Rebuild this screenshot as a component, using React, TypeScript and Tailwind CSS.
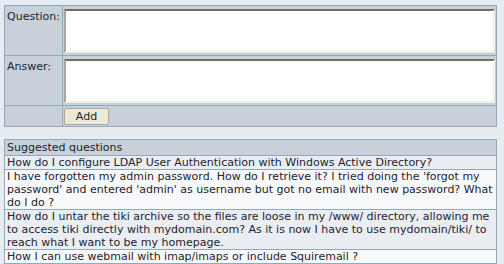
import React from 'react';

const suggestions = [
  'How do I configure LDAP User Authentication with Windows Active Directory?',
  "I have forgotten my admin password. How do I retrieve it? I tried doing the 'forgot my password' and entered 'admin' as username but got no email with new password? What do I do ?",
  'How do I untar the tiki archive so the files are loose in my /www/ directory, allowing me to access tiki directly with mydomain.com? As it is now I have to use mydomain/tiki/ to reach what I want to be my homepage.',
  'How I can use webmail with imap/imaps or include Squiremail ?',
];

export default function App() {
  return (
    <div
      className="min-h-screen bg-[#e7ecf0] px-[4px] pt-[5px] text-[11px] leading-[13px] text-[#1c2230]"
      style={{ fontFamily: '"DejaVu Sans", Verdana, sans-serif' }}
    >
      {/* Form */}
      <table className="w-[493px] border-collapse border border-[#8eabbd]">
        <tbody>
          <tr className="h-[50px]">
            <td className="w-[58px] border border-[#8eabbd] bg-[#c8d1da] px-[2px] pt-[4px] align-top">Question:</td>
            <td className="border border-[#8eabbd] bg-[#c8d1da] px-[1px] align-middle">
              <textarea className="block h-[44px] w-[431px] resize-none border-2 border-t-[#716f64] border-l-[#a7a69c] border-r-[#f1efe2] border-b-[#f1efe2] bg-white" />
            </td>
          </tr>
          <tr className="h-[50px]">
            <td className="border border-[#8eabbd] bg-[#c8d1da] px-[2px] pt-[4px] align-top">Answer:</td>
            <td className="border border-[#8eabbd] bg-[#c8d1da] px-[1px] align-middle">
              <textarea className="block h-[44px] w-[431px] resize-none border-2 border-t-[#716f64] border-l-[#a7a69c] border-r-[#f1efe2] border-b-[#f1efe2] bg-white" />
            </td>
          </tr>
          <tr className="h-[21px]">
            <td className="border border-[#8eabbd] bg-[#c8d1da]"></td>
            <td className="border border-[#8eabbd] bg-[#c8d1da] px-[1px] align-middle">
              <button className="block h-[17px] w-[45px] rounded-[2px] border border-[#aca899] bg-[#ece9d8] text-[11px] leading-[15px] text-[#1c2230]">
                Add
              </button>
            </td>
          </tr>
        </tbody>
      </table>

      {/* Suggested questions */}
      <table className="mt-[12px] w-[493px] border-collapse border border-[#8eabbd]">
        <tbody>
          <tr>
            <td className="border border-[#8eabbd] bg-[#c8d1da] px-[2px] py-[1px]">Suggested questions</td>
          </tr>
          {suggestions.map((q, i) => (
            <tr key={i}>
              <td
                className={`border border-[#8eabbd] px-[2px] py-0 ${
                  i % 2 === 0 ? 'bg-[#eaeef2]' : 'bg-[#f8f9fb]'
                }`}
              >
                {q}
              </td>
            </tr>
          ))}
        </tbody>
      </table>
    </div>
  );
}
